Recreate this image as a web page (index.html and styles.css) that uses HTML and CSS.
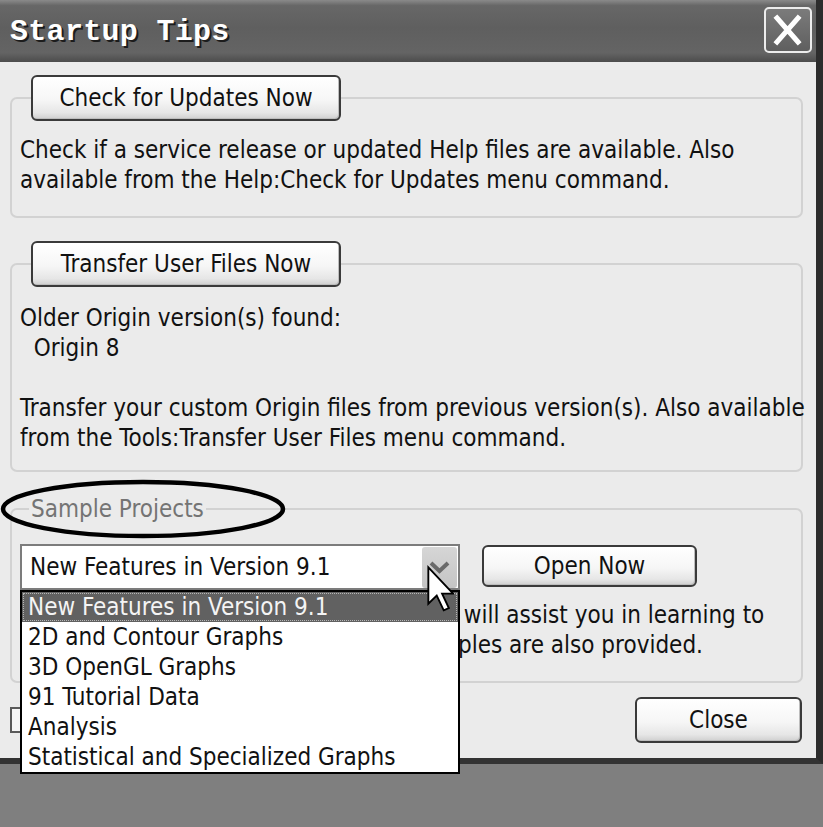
FILE: index.html
```html
<!DOCTYPE html>
<html>
<head>
<meta charset="utf-8">
<title>Startup Tips</title>
<link rel="stylesheet" href="styles.css">
</head>
<body>
<div class="window">
  <div class="titlebar">
    <span class="title">Startup Tips</span>
    <button class="x-btn" aria-label="Close">
      <svg viewBox="0 0 44 42" width="44" height="42"><path d="M11 9 L32 33 M32 9 L11 33" stroke="#fff" stroke-width="5" stroke-linecap="square" fill="none"/></svg>
    </button>
  </div>
  <div class="content">
    <fieldset class="group g1">
      <legend class="btn-legend"><button class="btn btn-wide">Check for Updates Now</button></legend>
      <p class="desc d1">Check if a service release or updated Help files are available. Also<br>available from the Help:Check for Updates menu command.</p>
    </fieldset>
    <fieldset class="group g2">
      <legend class="btn-legend"><button class="btn btn-wide">Transfer User Files Now</button></legend>
      <p class="desc d2">Older Origin version(s) found:<br>&nbsp;&nbsp;Origin 8<br><br>Transfer your custom Origin files from previous version(s). Also available<br>from the Tools:Transfer User Files menu command.</p>
    </fieldset>
    <fieldset class="group g3">
      <legend class="text-legend">Sample Projects</legend>
      <div class="combo-row">
        <div class="combo">
          <span class="combo-value">New Features in Version 9.1</span>
          <span class="combo-arrow">
            <svg viewBox="0 0 35 41" width="35" height="41"><path d="M9 16 L17.5 24 L26 16" stroke="#6a6a6a" stroke-width="4" fill="none"/></svg>
          </span>
          <ul class="combo-list">
            <li class="selected">New Features in Version 9.1</li>
            <li>2D and Contour Graphs</li>
            <li>3D OpenGL Graphs</li>
            <li>91 Tutorial Data</li>
            <li>Analysis</li>
            <li>Statistical and Specialized Graphs</li>
          </ul>
        </div>
        <button class="btn btn-open">Open Now</button>
      </div>
      <p class="desc d3"><span class="under u1"></span> will assist you in learning to<br><span class="under u2">exam</span>ples are also provided.</p>
    </fieldset>
    <div class="footer">
      <span class="box"></span>
      <button class="btn btn-close">Close</button>
    </div>
  </div>
</div>
<svg class="ellipse" viewBox="0 0 290 64" width="290" height="64"><ellipse cx="143" cy="31" rx="140" ry="27" fill="none" stroke="#000" stroke-width="4.5"/></svg>
<svg class="cursor" viewBox="0 0 12 20" width="28" height="47" preserveAspectRatio="none"><path d="M1 1 L1 16.5 L4.6 13 L7.6 19.3 L9.8 18.3 L6.9 12.2 L11.6 12.2 Z" fill="#fff" stroke="#000" stroke-width="0.8" stroke-linejoin="miter"/></svg>
</body>
</html>
```

FILE: styles.css
```css
* {
  box-sizing: border-box;
}

body {
  margin: 0;
  width: 823px;
  height: 827px;
  position: relative;
  overflow: hidden;
  background: #7f7f7f;
  font-family: "DejaVu Sans Condensed", "DejaVu Sans", sans-serif;
  font-stretch: condensed;
  font-size: 24px;
  color: #111;
}

.window {
  width: 823px;
  background: #ebebeb;
  border-right: 7px solid #2c2c2c;
  border-bottom: 6px solid #333;
}

.titlebar {
  height: 62px;
  display: flex;
  align-items: center;
  justify-content: space-between;
  padding: 0 4px 0 10px;
  background: linear-gradient(to bottom, #8a8a8a 0, #676767 9%, #5f5f5f 45%, #646464 85%, #4c4c4c 100%);
}

.title {
  font-family: "Liberation Mono", "DejaVu Sans Mono", monospace;
  font-weight: bold;
  font-size: 30px;
  letter-spacing: 0.3px;
  color: #fff;
  text-shadow: 2px 2px 0 #1c1c1c;
  margin-top: 1px;
}

.x-btn {
  width: 48px;
  height: 46px;
  padding: 0;
  border: 2px solid #ececec;
  border-radius: 5px;
  background: linear-gradient(to bottom, #7b7b7b, #5f5f5f);
  display: flex;
  align-items: center;
  justify-content: center;
  margin-top: -2px;
}

.x-btn svg {
  display: block;
}

.content {
  padding: 13px 0 15px 0;
}

.group {
  margin: 0 0 0 10px;
  width: 793px;
  min-width: 0;
  border: 2px solid #d2d2d2;
  border-radius: 7px;
  padding: 0 8px;
}

.g2 {
  margin-top: 23px;
}

.g3 {
  margin-top: 22px;
  padding-bottom: 21px;
}

.btn-legend {
  padding: 0;
  margin-left: 11px;
  line-height: 0;
}

.text-legend {
  padding: 0 2px;
  margin-left: 9px;
  line-height: 30px;
  color: #747474;
}

.btn {
  font-family: inherit;
  font-stretch: condensed;
  font-size: 24px;
  color: #111;
  border: 2px solid #3a3a3a;
  border-radius: 6px;
  background: linear-gradient(to bottom, #ffffff 0, #f6f6f6 55%, #e6e6e6 85%, #cfcfcf 100%);
  box-shadow: inset -1px -1px 0 #bdbdbd;
  padding: 0;
  line-height: 1;
}

.btn-wide {
  width: 310px;
  height: 46px;
}

.btn-open {
  width: 215px;
  height: 42px;
  margin-top: 1px;
}

.btn-close {
  width: 167px;
  height: 46px;
}

.desc {
  margin: 0;
  line-height: 30px;
  white-space: nowrap;
}

.d1 {
  margin-top: 14px;
  padding-bottom: 21px;
}

.d2 {
  margin-top: 16px;
  padding-bottom: 17px;
}

.d3 {
  margin-top: 10px;
}

.under {
  display: inline-block;
  vertical-align: top;
  height: 30px;
  overflow: hidden;
  text-align: right;
  white-space: nowrap;
}

.u1 {
  width: 437px;
}

.u2 {
  width: 438px;
}

.combo-row {
  margin-top: 20px;
  display: flex;
  align-items: flex-start;
  gap: 22px;
}

.combo {
  position: relative;
  width: 440px;
  height: 46px;
  background: #fff;
  border: 2px solid #7c7c7c;
  padding-left: 8px;
  line-height: 42px;
}

.combo-arrow {
  position: absolute;
  top: 1px;
  right: 1px;
  width: 35px;
  height: 41px;
  border-radius: 3px;
  background: linear-gradient(to bottom, #d6d6d6, #c4c4c4);
}

.combo-arrow svg {
  display: block;
}

.combo-list {
  position: absolute;
  z-index: 5;
  top: 44px;
  left: -2px;
  width: 440px;
  margin: 0;
  padding: 0;
  list-style: none;
  background: #fff;
  border: 2px solid #000;
}

.combo-list li {
  height: 30px;
  line-height: 30px;
  padding-left: 6px;
  white-space: nowrap;
  color: #111;
}

.combo-list li.selected {
  background: #616161;
  color: #f4f4f4;
  outline: 1px dotted #b5b5b5;
  outline-offset: -2px;
}

.footer {
  margin-top: 14px;
  height: 46px;
  display: flex;
  align-items: center;
  justify-content: space-between;
  padding: 0 14px 0 10px;
}

.box {
  width: 26px;
  height: 26px;
  border: 2px solid #5a5a5a;
  background: #f7f7f7;
}

.ellipse {
  position: absolute;
  left: 0;
  top: 478px;
  z-index: 6;
}

.cursor {
  position: absolute;
  left: 426px;
  top: 565px;
  z-index: 10;
}
```
